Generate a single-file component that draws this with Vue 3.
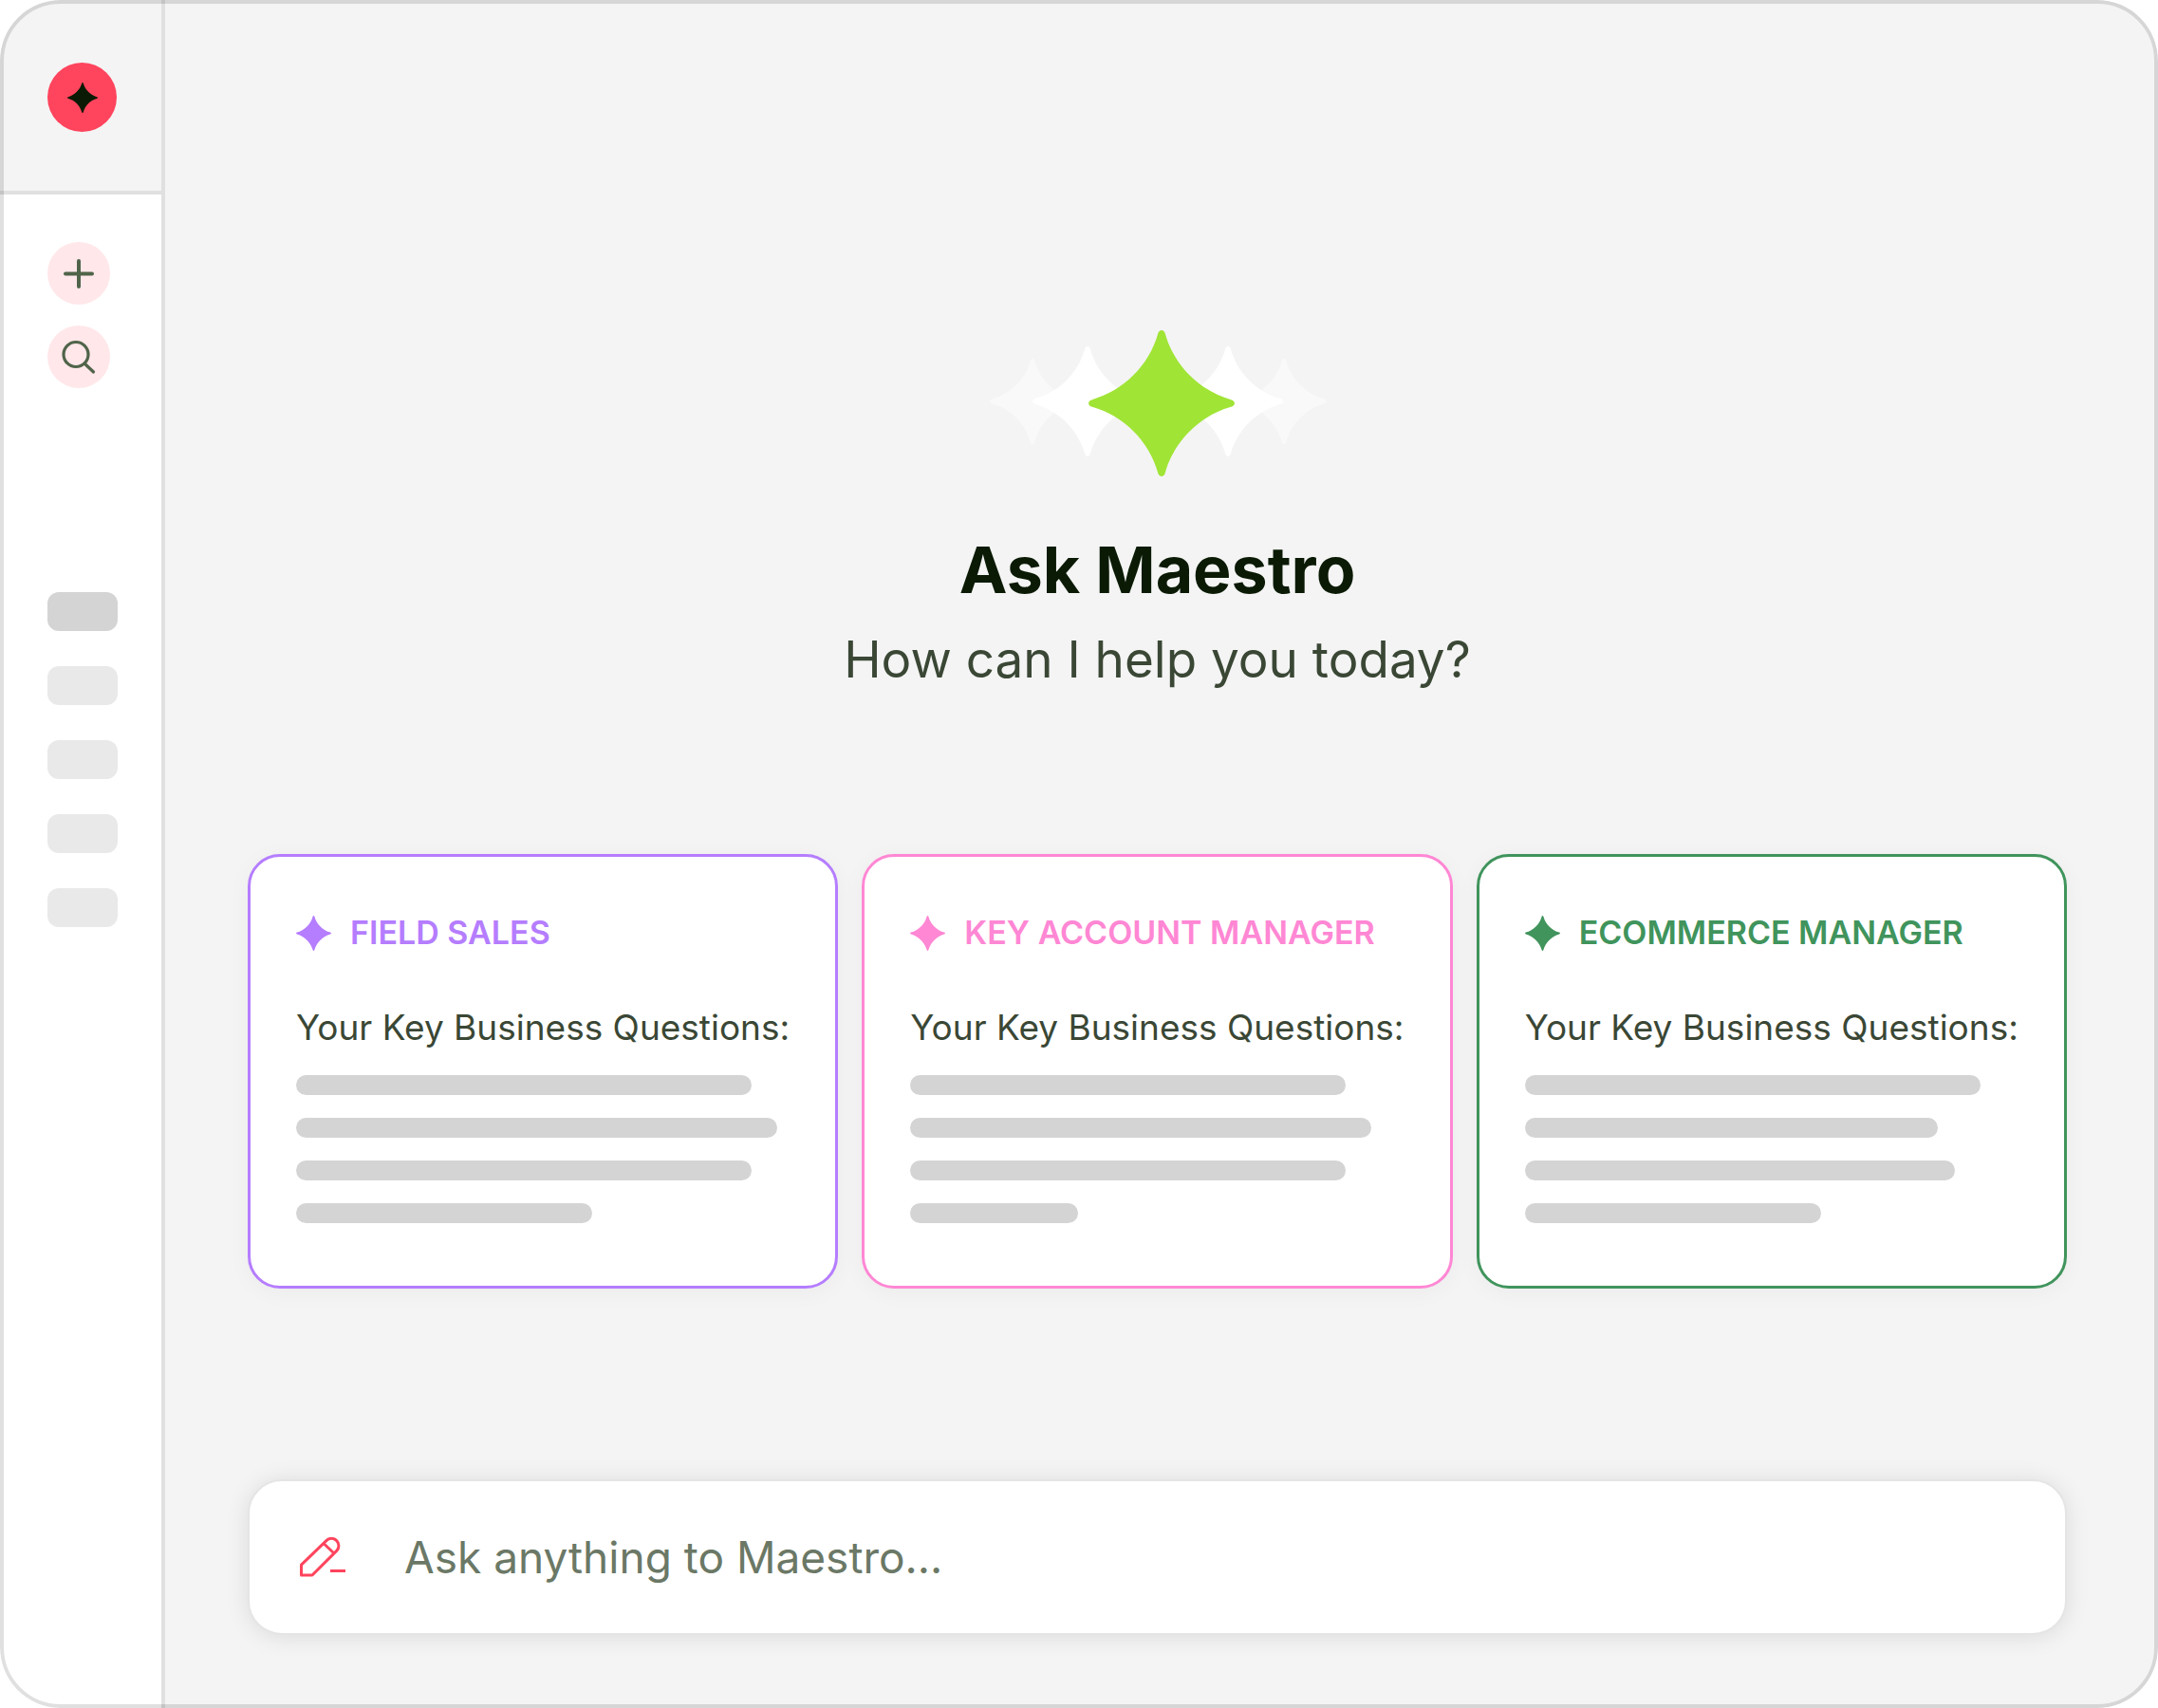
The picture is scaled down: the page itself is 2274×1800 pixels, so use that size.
<script setup>
import { ref } from 'vue'

const question = ref('')

const starPath =
  'M-5 -95C-3.3 -101.5 3.3 -101.5 5 -95C17 -52 52 -17 95 -5C101.5 -3.3 101.5 3.3 95 5C52 17 17 52 5 95C3.3 101.5 -3.3 101.5 -5 95C-17 52 -52 17 -95 5C-101.5 3.3 -101.5 -3.3 -95 -5C-52 -17 -17 -52 -5 -95Z'

const heroStars = [
  { x: 46, y: 75, r: 45, fill: '#f9f9f9' },
  { x: 311, y: 75, r: 45, fill: '#f9f9f9' },
  { x: 104, y: 75, r: 58, fill: '#ffffff' },
  { x: 252, y: 75, r: 58, fill: '#ffffff' },
  { x: 182, y: 77, r: 77, fill: '#a0e435' },
]

const cards = [
  { title: 'FIELD SALES', color: '#b57dff', bars: [480, 507, 480, 312] },
  { title: 'KEY ACCOUNT MANAGER', color: '#ff87d4', bars: [459, 486, 459, 177] },
  { title: 'ECOMMERCE MANAGER', color: '#40945c', bars: [480, 435, 453, 312] },
]
</script>

<template>
  <div class="app">
    <aside class="sidebar">
      <div class="brand">
        <div class="logo">
          <svg width="32" height="32" viewBox="-100 -100 200 200" aria-hidden="true">
            <path :d="starPath" fill="#0a1a04" />
          </svg>
        </div>
      </div>
      <div class="tools">
        <button type="button" class="tool" aria-label="New chat">
          <svg width="66" height="66" viewBox="0 0 66 66" aria-hidden="true">
            <path d="M33 20V47M19 33.5H47" stroke-width="4" />
          </svg>
        </button>
        <button type="button" class="tool" aria-label="Search">
          <svg width="66" height="66" viewBox="0 0 66 66" aria-hidden="true">
            <circle cx="30" cy="30.500" r="13" stroke-width="3.200" />
            <path d="M39.500 40.500L48.500 49" stroke-width="3.200" />
          </svg>
        </button>
      </div>
      <div class="history">
        <span v-for="n in 5" :key="n" class="pill" :class="{ active: n === 1 }"></span>
      </div>
    </aside>

    <main class="main">
      <svg class="hero" width="356" height="154" viewBox="0 0 356 154" aria-hidden="true">
        <path
          v-for="(s, i) in heroStars"
          :key="i"
          :d="starPath"
          :fill="s.fill"
          :transform="`translate(${s.x} ${s.y}) scale(${s.r / 100})`"
        />
      </svg>
      <h1 class="title">Ask Maestro</h1>
      <p class="subtitle">How can I help you today?</p>

      <section class="cards">
        <article
          v-for="card in cards"
          :key="card.title"
          class="card"
          :style="{ borderColor: card.color }"
        >
          <h2 class="card-title" :style="{ color: card.color }">
            <svg width="37" height="37" viewBox="-100 -100 200 200" aria-hidden="true">
              <path :d="starPath" fill="currentColor" />
            </svg>
            {{ card.title }}
          </h2>
          <p class="card-text">Your Key Business Questions:</p>
          <div class="bars">
            <span v-for="(w, i) in card.bars" :key="i" class="bar" :style="{ width: w + 'px' }"></span>
          </div>
        </article>
      </section>

      <form class="ask" @submit.prevent>
        <label for="question" class="ask-icon" aria-label="Ask anything">
          <svg width="50" height="42" viewBox="0 0 50 42" aria-hidden="true">
            <path d="M1.500 40V29.200L27.900 3.600a7.600 7.600 0 0 1 10.800 10.800L13 40ZM25 6.500L36 17M32 35.500H48" />
          </svg>
        </label>
        <input id="question" v-model="question" type="text" placeholder="Ask anything to Maestro..." />
      </form>
    </main>
  </div>
</template>

<style>
body {
  background: #ffffff;
}
</style>

<style scoped>
.app {
  position: relative;
  display: flex;
  min-height: 100vh;
  overflow: hidden;
  border-radius: 64px;
  background: #f4f4f4;
  font-family: Inter, "Liberation Sans", sans-serif;
}

.app::after {
  content: "";
  position: absolute;
  inset: 0;
  border: 4px solid rgba(0, 0, 0, 0.12);
  border-radius: 64px;
  pointer-events: none;
}

.sidebar {
  box-sizing: border-box;
  flex: none;
  width: 174px;
  border-right: 4px solid rgba(0, 0, 0, 0.12);
  background: #ffffff;
}

.brand {
  padding: 66px 0 62px 50px;
  border-bottom: 4px solid #e0e0e0;
  background: #f4f4f4;
}

.logo {
  display: flex;
  align-items: center;
  justify-content: center;
  width: 73px;
  height: 73px;
  border-radius: 50%;
  background: #ff445d;
}

.tools {
  display: flex;
  flex-direction: column;
  gap: 22px;
  padding: 50px 0 0 50px;
}

.tool {
  width: 66px;
  height: 66px;
  padding: 0;
  border: 0;
  border-radius: 50%;
  background: #ffe7ea;
}

.tool svg {
  display: block;
  fill: none;
  stroke: #50644a;
  stroke-linecap: round;
}

.history {
  display: flex;
  flex-direction: column;
  gap: 37px;
  padding: 215px 0 50px 50px;
}

.pill {
  width: 74px;
  height: 41px;
  border-radius: 12px;
  background: #e9e9e9;
}

.pill.active {
  background: #d4d4d4;
}

.main {
  display: flex;
  flex: 1;
  flex-direction: column;
  min-width: 0;
  padding: 348px 96px 77px 87px;
}

.hero {
  align-self: center;
}

.title {
  margin: 58px 0 0;
  color: #0a1a04;
  font-size: 68px;
  font-weight: 700;
  line-height: 80px;
  text-align: center;
}

.subtitle {
  margin: 23px 0 0;
  color: #3a4735;
  font-size: 53px;
  line-height: 64px;
  text-align: center;
}

.cards {
  display: grid;
  grid-template-columns: repeat(3, 1fr);
  gap: 25px;
  margin-top: 173px;
}

.card {
  min-width: 0;
  padding: 60px 0 66px 48px;
  border: 3px solid;
  border-radius: 34px;
  background: #ffffff;
  box-shadow: 0 4px 24px rgba(0, 0, 0, 0.04);
}

.card-title {
  display: flex;
  align-items: center;
  gap: 20px;
  margin: 0;
  font-size: 34px;
  font-weight: 600;
  line-height: 40px;
  white-space: nowrap;
}

.card-text {
  margin: 56px 0 0;
  color: #3a4735;
  font-size: 37px;
  line-height: 48px;
  white-space: nowrap;
}

.bars {
  display: flex;
  flex-direction: column;
  gap: 24px;
  margin-top: 26px;
}

.bar {
  height: 21px;
  border-radius: 11px;
  background: #d4d4d4;
}

.ask {
  display: flex;
  align-items: center;
  gap: 60px;
  box-sizing: border-box;
  height: 164px;
  margin-top: 201px;
  padding: 0 53px;
  border: 2px solid #e5e5e5;
  border-radius: 36px;
  background: #ffffff;
  box-shadow: 0 2px 24px rgba(0, 0, 0, 0.1);
}

.ask-icon svg {
  display: block;
  fill: none;
  stroke: #ff445d;
  stroke-width: 3;
  stroke-linejoin: round;
}

.ask input {
  flex: 1;
  min-width: 0;
  padding: 0;
  border: 0;
  outline: 0;
  background: none;
  color: #3a4735;
  font: inherit;
  font-size: 46px;
  line-height: 64px;
}

.ask input::placeholder {
  color: #6b7866;
  opacity: 1;
}
</style>
